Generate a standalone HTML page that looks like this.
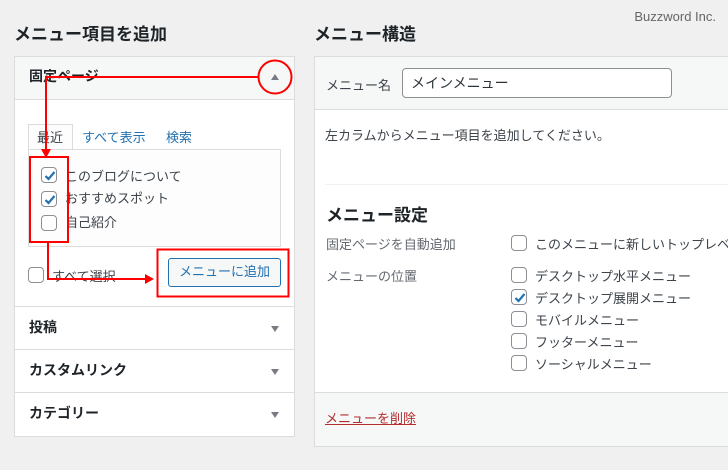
<!DOCTYPE html>
<html><head><meta charset="utf-8"><style>
*{box-sizing:border-box;margin:0;padding:0}
html,body{width:728px;height:470px;overflow:hidden}
body{background:#f0f0f1;font-family:"Liberation Sans","Noto Sans CJK JP",sans-serif;color:#3c434a;font-size:13px;position:relative}
#w{position:absolute;left:0;top:0;width:728px;height:470px;overflow:hidden}
.a{position:absolute;white-space:nowrap}
.h2{font-size:17px;font-weight:bold;color:#1d2327}
.cb{position:absolute;width:16px;height:16px;border:1px solid #8c8f94;border-radius:4px;background:#fff}
.cb svg{position:absolute;left:0;top:0}
.sec{position:absolute;left:15px;width:279px;height:43px;border-top:1px solid #dcdcde;background:#fff}
.sec span{position:absolute;left:14px;top:10px;font-size:14px;font-weight:bold;color:#1d2327}
.tri{position:absolute;right:15px;top:19px;width:0;height:0;border-left:4px solid transparent;border-right:4px solid transparent;border-top:6px solid #787c82}
</style></head><body><div id="w">
<div class="a" style="right:12px;top:9px;font-size:13px;color:#666">Buzzword Inc.</div>
<div class="a h2" style="left:14px;top:20px">メニュー項目を追加</div>
<div class="a h2" style="left:314px;top:20px">メニュー構造</div>

<div class="a" style="left:14px;top:56px;width:281px;height:381px;border:1px solid #dcdcde;background:#fff"></div>
<div class="a" style="left:15px;top:57px;width:279px;height:43px;background:#f6f7f7;border-bottom:1px solid #dcdcde"></div>
<div class="a" style="left:29px;top:66px;font-size:14px;font-weight:bold;color:#1d2327">固定ページ</div>
<div class="a" style="left:271px;top:74px;width:0;height:0;border-left:4px solid transparent;border-right:4px solid transparent;border-bottom:6px solid #787c82"></div>

<div class="a" style="left:28px;top:124px;width:45px;height:26px;border:1px solid #dcdcde;border-bottom:none;background:#fdfdfd"></div>
<div class="a" style="left:37px;top:127px;color:#3c434a">最近</div>
<div class="a" style="left:82px;top:127px;color:#2271b1">すべて表示</div>
<div class="a" style="left:166px;top:127px;color:#2271b1">検索</div>
<div class="a" style="left:28px;top:149px;width:253px;height:98px;border:1px solid #dcdcde;background:#fdfdfd"></div>
<div class="a" style="left:72px;top:149px;width:209px;height:1px;background:#dcdcde"></div>

<div class="cb" style="left:41px;top:167px"><svg width="16" height="16"><path d="M3.5 8l3 3 6-7" stroke="#2271b1" stroke-width="2.2" fill="none"/></svg></div>
<div class="a" style="left:65px;top:166px">このブログについて</div>
<div class="cb" style="left:41px;top:191px"><svg width="16" height="16"><path d="M3.5 8l3 3 6-7" stroke="#2271b1" stroke-width="2.2" fill="none"/></svg></div>
<div class="a" style="left:65px;top:188px">おすすめスポット</div>
<div class="cb" style="left:41px;top:215px"></div>
<div class="a" style="left:65px;top:212px">自己紹介</div>

<div class="cb" style="left:28px;top:267px"></div>
<div class="a" style="left:52px;top:266px">すべて選択</div>
<div class="a" style="left:168px;top:258px;width:113px;height:29px;border:1px solid #2271b1;border-radius:3px;background:#f6f7f7;color:#2271b1;text-align:center;line-height:25px">メニューに追加</div>

<div class="sec" style="top:306px"><span>投稿</span><div class="tri"></div></div>
<div class="sec" style="top:349px"><span>カスタムリンク</span><div class="tri"></div></div>
<div class="sec" style="top:392px"><span>カテゴリー</span><div class="tri"></div></div>

<div class="a" style="left:314px;top:56px;width:420px;height:391px;border:1px solid #dcdcde;background:#fff;white-space:normal;overflow:hidden">
<div class="a" style="left:0;top:0;width:420px;height:53px;background:#f6f7f7;border-bottom:1px solid #dcdcde"></div>
<div class="a" style="left:11px;top:18px">メニュー名</div>
<div class="a" style="left:87px;top:11px;width:270px;height:30px;border:1px solid #8c8f94;border-radius:4px;background:#fff"></div>
<div class="a" style="left:96px;top:16px;font-size:14px;color:#2c3338">メインメニュー</div>
<div class="a" style="left:10px;top:68px">左カラムからメニュー項目を追加してください。</div>
<div class="a" style="left:10px;top:127px;width:410px;height:1px;background:#f0f0f1"></div>
<div class="a" style="left:11px;top:144px;font-size:17px;font-weight:bold;color:#1d2327">メニュー設定</div>
<div class="a" style="left:11px;top:177px;color:#646970">固定ページを自動追加</div>
<div class="cb" style="left:196px;top:178px"></div>
<div class="a" style="left:220px;top:177px">このメニューに新しいトップレベルページを自動追加</div>
<div class="a" style="left:11px;top:209px;color:#646970">メニューの位置</div>
<div class="cb" style="left:196px;top:210px"></div><div class="a" style="left:220px;top:209px">デスクトップ水平メニュー</div>
<div class="cb" style="left:196px;top:232px"><svg width="16" height="16"><path d="M3.5 8l3 3 6-7" stroke="#2271b1" stroke-width="2.2" fill="none"/></svg></div><div class="a" style="left:220px;top:231px">デスクトップ展開メニュー</div>
<div class="cb" style="left:196px;top:254px"></div><div class="a" style="left:220px;top:253px">モバイルメニュー</div>
<div class="cb" style="left:196px;top:276px"></div><div class="a" style="left:220px;top:275px">フッターメニュー</div>
<div class="cb" style="left:196px;top:298px"></div><div class="a" style="left:220px;top:297px">ソーシャルメニュー</div>
<div class="a" style="left:0;top:335px;width:420px;height:55px;background:#f6f7f7;border-top:1px solid #dcdcde"></div>
<div class="a" style="left:10px;top:351px;color:#b32d2e;text-decoration:underline">メニューを削除</div>
</div>

<svg class="a" style="left:0;top:0" width="728" height="470">
<g stroke="#f00" stroke-width="2" fill="none">
<circle cx="275" cy="77" r="16.5"/>
<path d="M258 77H46V152"/>
<rect x="30" y="157" width="38" height="85"/>
<path d="M48 242V279H148"/>
<rect x="157.5" y="249.5" width="131" height="47"/>
</g>
<path d="M41 149L46 158L51 149Z" fill="#f00"/>
<path d="M145 274L154 279L145 284Z" fill="#f00"/>
</svg>
</div></body></html>
